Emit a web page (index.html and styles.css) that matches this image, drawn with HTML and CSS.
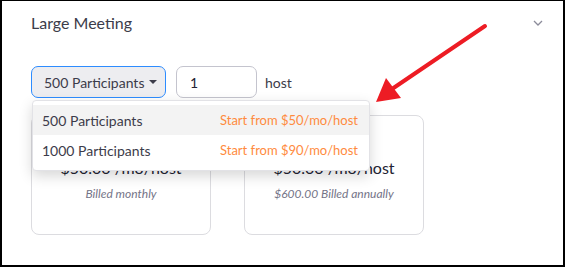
FILE: index.html
```html
<!DOCTYPE html>
<html lang="en">
<head>
    <meta charset="UTF-8">
    <title>Large Meeting</title>
    <link rel="stylesheet" href="styles.css">
</head>
<body>

    <div class="frame">
        <div class="section-head">
            <h2>Large Meeting</h2>
            <svg class="chevron" width="10" height="6" viewBox="0 0 10 6">
                <path d="M1 1 L5 5 L9 1" fill="none" stroke="#8b8b9a" stroke-width="1.3"/>
            </svg>
        </div>

        <div class="controls">
            <div class="picker">
                <button class="picker-btn">500 Participants <span class="caret"></span></button>
                <ul class="menu">
                    <li class="menu-item active">
                        <span>500 Participants</span>
                        <span class="menu-price">Start from $50/mo/host</span>
                    </li>
                    <li class="menu-item">
                        <span>1000 Participants</span>
                        <span class="menu-price">Start from $90/mo/host</span>
                    </li>
                </ul>
            </div>
            <input class="host-input" type="text" value="1">
            <span class="host-label">host</span>
        </div>

        <div class="plans">
            <div class="plan">
                <p class="price">$50.00 /mo/host</p>
                <p class="billed">Billed monthly</p>
            </div>
            <div class="plan">
                <p class="price">$50.00 /mo/host</p>
                <p class="billed">$600.00 Billed annually</p>
            </div>
        </div>

        <!-- annotation arrow -->
        <svg class="arrow" width="565" height="267" viewBox="0 0 565 267">
            <line x1="485" y1="26" x2="392" y2="89" stroke="#ed1c24" stroke-width="4" stroke-linecap="round"/>
            <polygon points="376,102 386,78 401,98" fill="#ed1c24"/>
        </svg>
    </div>

</body>
</html>
```

FILE: styles.css
```css
* {
    box-sizing: border-box;
}

body {
    margin: 0;
    font-family: Lato, "Open Sans", sans-serif;
    color: #232333;
    background: #fff;
}

.frame {
    position: relative;
    width: 565px;
    height: 267px;
    border: 2px solid #000;
    border-top-width: 1px;
    padding: 0 20px 0 29px;
    overflow: hidden;
}

/* Header */
.section-head {
    display: flex;
    justify-content: space-between;
    align-items: center;
    height: 43px;
}

.section-head h2 {
    margin: 0;
    font-size: 16px;
    font-weight: normal;
    color: #3c3c4a;
}

.chevron {
    margin-top: 1px;
}

/* Participants + hosts */
.controls {
    display: flex;
    align-items: center;
    gap: 10px;
    margin-top: 22px;
    height: 32px;
}

.picker {
    position: relative;
}

.picker-btn {
    display: flex;
    align-items: center;
    gap: 5px;
    width: 135px;
    height: 32px;
    padding: 0 8px 0 12px;
    font-family: inherit;
    font-size: 14px;
    white-space: nowrap;
    color: #3c3c4a;
    background: #ededf0;
    border: 1px solid #2d8cff;
    border-radius: 7px;
}

.caret {
    width: 0;
    height: 0;
    border-left: 4px solid transparent;
    border-right: 4px solid transparent;
    border-top: 4px solid #3c3c4a;
}

.host-input {
    width: 81px;
    height: 32px;
    padding: 0 13px;
    font-family: inherit;
    font-size: 14px;
    color: #232333;
    border: 1px solid #c4c4ce;
    border-radius: 7px;
}

.host-label {
    margin-left: -2px;
    font-size: 14px;
    color: #3c3c4a;
}

/* Dropdown */
.menu {
    position: absolute;
    top: 34px;
    left: 1px;
    z-index: 2;
    width: 338px;
    margin: 0;
    padding: 4px 0 5px;
    list-style: none;
    background: #fff;
    border: 1px solid #e2e2e6;
    border-radius: 4px;
    box-shadow: 0 5px 14px rgba(0,0,0,0.16);
}

.menu-item {
    display: flex;
    justify-content: space-between;
    align-items: center;
    height: 30px;
    padding: 0 11px 0 9px;
    font-size: 14px;
    color: #3c3c4a;
}

.menu-item.active {
    background: #f3f3f3;
}

.menu-price {
    font-size: 13px;
    color: #ff8b3e;
}

/* Plan cards */
.plans {
    display: flex;
    gap: 33px;
    margin-top: 17px;
}

.plan {
    width: 180px;
    height: 120px;
    padding-top: 40px;
    text-align: center;
    border: 1px solid #dcdce0;
    border-radius: 8px;
}

.price {
    margin: 0;
    font-size: 16px;
    line-height: 24px;
    color: #232333;
}

.billed {
    margin: 6px 0 0;
    font-size: 12px;
    font-style: italic;
    color: #747487;
}

.arrow {
    position: absolute;
    top: -1px;
    left: -2px;
    z-index: 3;
    pointer-events: none;
}
```
